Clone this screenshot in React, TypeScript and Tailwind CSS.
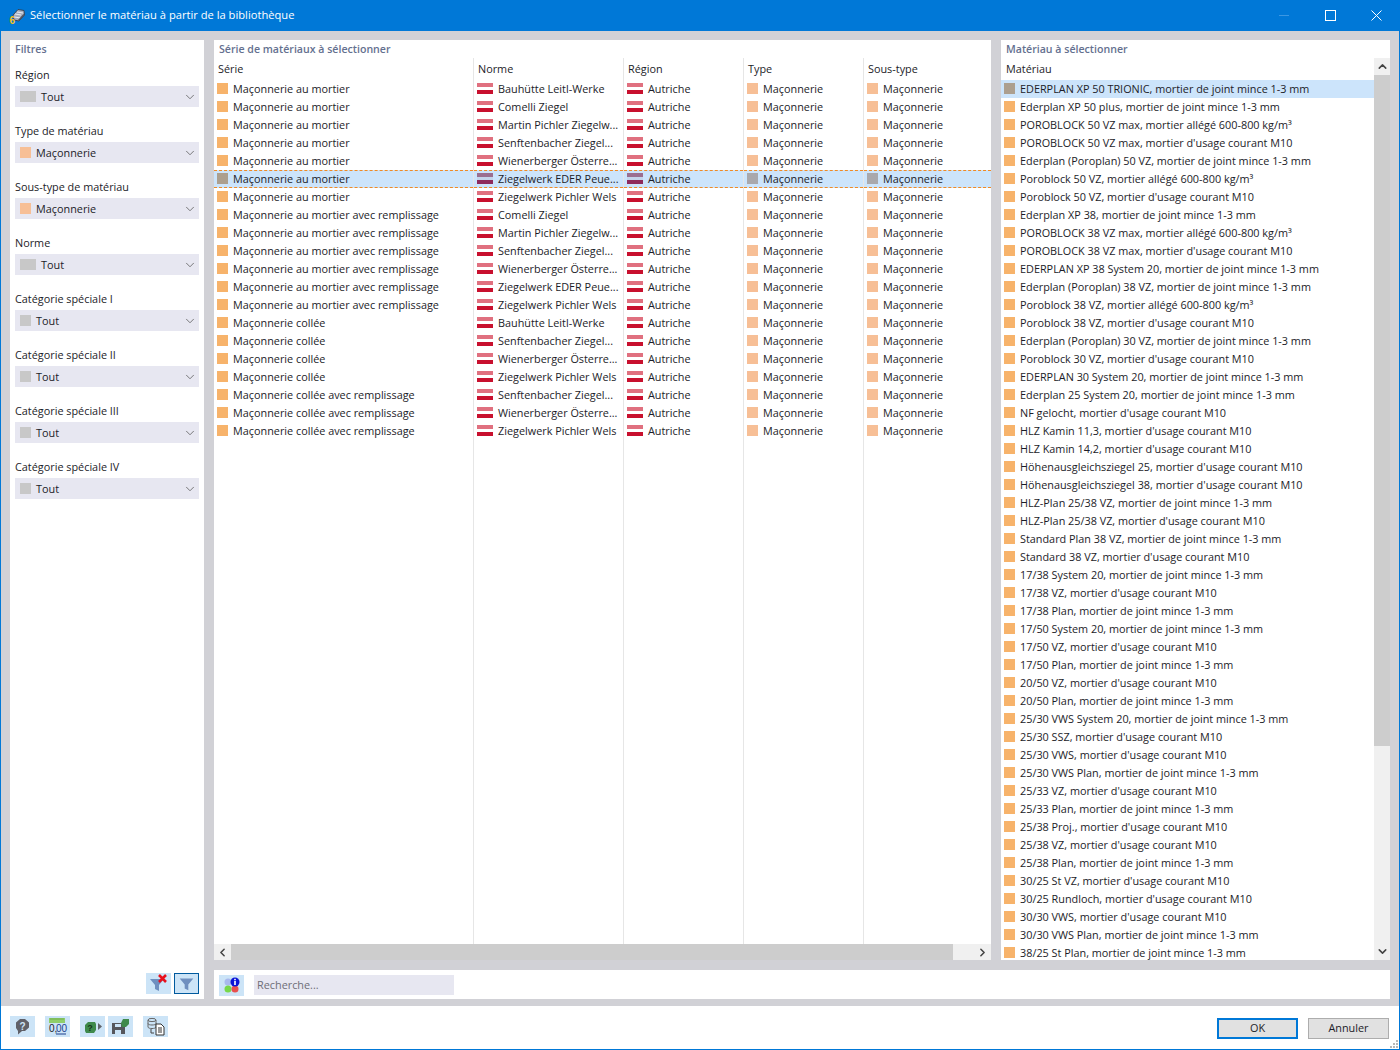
import { ChevronDown, ChevronLeft, ChevronRight, ChevronUp } from "lucide-react";

const FONT = "font-['Open_Sans',sans-serif]";

const series = [
  ...Array(7).fill("Maçonnerie au mortier"),
  ...Array(6).fill("Maçonnerie au mortier avec remplissage"),
  ...Array(4).fill("Maçonnerie collée"),
  ...Array(3).fill("Maçonnerie collée avec remplissage"),
];

const normes = [
  "Bauhütte Leitl-Werke",
  "Comelli Ziegel",
  "Martin Pichler Ziegelw...",
  "Senftenbacher Ziegel...",
  "Wienerberger Österre...",
  "Ziegelwerk EDER Peue...",
  "Ziegelwerk Pichler Wels",
  "Comelli Ziegel",
  "Martin Pichler Ziegelw...",
  "Senftenbacher Ziegel...",
  "Wienerberger Österre...",
  "Ziegelwerk EDER Peue...",
  "Ziegelwerk Pichler Wels",
  "Bauhütte Leitl-Werke",
  "Senftenbacher Ziegel...",
  "Wienerberger Österre...",
  "Ziegelwerk Pichler Wels",
  "Senftenbacher Ziegel...",
  "Wienerberger Österre...",
  "Ziegelwerk Pichler Wels",
];

const materials = [
  "EDERPLAN XP 50 TRIONIC, mortier de joint mince 1-3 mm",
  "Ederplan XP 50 plus, mortier de joint mince 1-3 mm",
  "POROBLOCK 50 VZ max, mortier allégé 600-800 kg/m³",
  "POROBLOCK 50 VZ max, mortier d'usage courant M10",
  "Ederplan (Poroplan) 50 VZ, mortier de joint mince 1-3 mm",
  "Poroblock 50 VZ, mortier allégé 600-800 kg/m³",
  "Poroblock 50 VZ, mortier d'usage courant M10",
  "Ederplan XP 38, mortier de joint mince 1-3 mm",
  "POROBLOCK 38 VZ max, mortier allégé 600-800 kg/m³",
  "POROBLOCK 38 VZ max, mortier d'usage courant M10",
  "EDERPLAN XP 38 System 20, mortier de joint mince 1-3 mm",
  "Ederplan (Poroplan) 38 VZ, mortier de joint mince 1-3 mm",
  "Poroblock 38 VZ, mortier allégé 600-800 kg/m³",
  "Poroblock 38 VZ, mortier d'usage courant M10",
  "Ederplan (Poroplan) 30 VZ, mortier de joint mince 1-3 mm",
  "Poroblock 30 VZ, mortier d'usage courant M10",
  "EDERPLAN 30 System 20, mortier de joint mince 1-3 mm",
  "Ederplan 25 System 20, mortier de joint mince 1-3 mm",
  "NF gelocht, mortier d'usage courant M10",
  "HLZ Kamin 11,3, mortier d'usage courant M10",
  "HLZ Kamin 14,2, mortier d'usage courant M10",
  "Höhenausgleichsziegel 25, mortier d'usage courant M10",
  "Höhenausgleichsziegel 38, mortier d'usage courant M10",
  "HLZ-Plan 25/38 VZ, mortier de joint mince 1-3 mm",
  "HLZ-Plan 25/38 VZ, mortier d'usage courant M10",
  "Standard Plan 38 VZ, mortier de joint mince 1-3 mm",
  "Standard 38 VZ, mortier d'usage courant M10",
  "17/38 System 20, mortier de joint mince 1-3 mm",
  "17/38 VZ, mortier d'usage courant M10",
  "17/38 Plan, mortier de joint mince 1-3 mm",
  "17/50 System 20, mortier de joint mince 1-3 mm",
  "17/50 VZ, mortier d'usage courant M10",
  "17/50 Plan, mortier de joint mince 1-3 mm",
  "20/50 VZ, mortier d'usage courant M10",
  "20/50 Plan, mortier de joint mince 1-3 mm",
  "25/30 VWS System 20, mortier de joint mince 1-3 mm",
  "25/30 SSZ, mortier d'usage courant M10",
  "25/30 VWS, mortier d'usage courant M10",
  "25/30 VWS Plan, mortier de joint mince 1-3 mm",
  "25/33 VZ, mortier d'usage courant M10",
  "25/33 Plan, mortier de joint mince 1-3 mm",
  "25/38 Proj., mortier d'usage courant M10",
  "25/38 VZ, mortier d'usage courant M10",
  "25/38 Plan, mortier de joint mince 1-3 mm",
  "30/25 St VZ, mortier d'usage courant M10",
  "30/25 Rundloch, mortier d'usage courant M10",
  "30/30 VWS, mortier d'usage courant M10",
  "30/30 VWS Plan, mortier de joint mince 1-3 mm",
  "38/25 St Plan, mortier de joint mince 1-3 mm",
];

const filters = [
  { label: "Région", value: "Tout", swatch: "wide" },
  { label: "Type de matériau", value: "Maçonnerie", swatch: "peach" },
  { label: "Sous-type de matériau", value: "Maçonnerie", swatch: "peach" },
  { label: "Norme", value: "Tout", swatch: "wide" },
  { label: "Catégorie spéciale I", value: "Tout", swatch: "gray" },
  { label: "Catégorie spéciale II", value: "Tout", swatch: "gray" },
  { label: "Catégorie spéciale III", value: "Tout", swatch: "gray" },
  { label: "Catégorie spéciale IV", value: "Tout", swatch: "gray" },
];

const SELECTED = 5;

function Flag({ selected }: { selected?: boolean }) {
  return (
    <span className="w-4 h-[11px] mb-[2px] flex flex-col shrink-0">
      <span className={`h-[4px] ${selected ? "bg-[#9a6f90]" : "bg-[#e0707f]"}`} />
      <span className={`h-[3px] ${selected ? "bg-[#c4d4ea]" : "bg-white"}`} />
      <span className={`h-[4px] ${selected ? "bg-[#8e2a5c]" : "bg-[#c8102e]"}`} />
    </span>
  );
}

function Swatch({ color }: { color: string }) {
  return <span className={`w-[11px] h-[11px] mb-[2px] shrink-0 ${color}`} />;
}

function Cell({ selected, icon, text }: { selected: boolean; icon: React.ReactNode; text: string }) {
  return (
    <div
      className={`h-[18px] flex items-center gap-[5px] pl-[3px] text-[10.85px] whitespace-nowrap overflow-hidden text-[#1c1c28] ${
        selected ? "bg-[#cce4fb] border-y border-dashed border-[#f08a24]" : ""
      }`}
    >
      {icon}
      <span>{text}</span>
    </div>
  );
}

function Column({
  title,
  width,
  rows,
  icon,
  last,
}: {
  title: string;
  width: string;
  rows: string[];
  icon: (selected: boolean) => React.ReactNode;
  last?: boolean;
}) {
  return (
    <div className={`${width} shrink-0 h-full flex flex-col ${last ? "" : "border-r border-[#e6e6e6]"}`}>
      <div className="h-[22px] flex items-center pl-1 text-[10.85px] text-[#1c1c28] shrink-0">{title}</div>
      {rows.map((r, i) => (
        <Cell key={i} selected={i === SELECTED} icon={icon(i === SELECTED)} text={r} />
      ))}
    </div>
  );
}

function ToolButton({ children, active }: { children: React.ReactNode; active?: boolean }) {
  return (
    <button
      className={`w-[25px] h-[21px] bg-[#cce4f7] flex items-center justify-center ${
        active ? "border border-[#005a9e]" : ""
      }`}
    >
      {children}
    </button>
  );
}

export default function App() {
  return (
    <div className={`relative w-[1400px] h-[1050px] flex flex-col bg-white border border-t-0 border-[#0078d7] ${FONT}`}>
      {/* barre de titre */}
      <div className="h-[31px] shrink-0 bg-[#0078d7] flex items-center text-white -mx-px">
        <svg viewBox="0 0 18 18" className="w-[18px] h-[18px] ml-[8px]">
          <path d="M5 8 L10 2.5 L16 3.5 L16.5 8 L11 14 L6 13 Z" fill="#a4acbc" stroke="#30343f" strokeWidth="0.8" />
          <path d="M7 7l6 1M9 5l6 1M6.5 10l6 1" stroke="#eef1f7" strokeWidth="0.9" />
          <path d="M11 14l5.5-6-1-1-5.5 6z" fill="#4d5261" />
          <text x="1.5" y="17" fontSize="10" fontWeight="700" fill="#f4c21c" fontFamily="Liberation Sans, sans-serif">6</text>
        </svg>
        <span className="ml-[4px] text-[11.17px]">Sélectionner le matériau à partir de la bibliothèque</span>
        <div className="ml-auto mr-px flex items-center">
          <span className="w-[46px] flex justify-center">
            <span className="w-[10px] h-px bg-[#3b97e3]" />
          </span>
          <span className="w-[46px] flex justify-center">
            <span className="w-[11px] h-[11px] border border-white" />
          </span>
          <span className="w-[46px] flex justify-center">
            <svg viewBox="0 0 11 11" className="w-[11px] h-[11px]">
              <path d="M.5.5l10 10M10.5.5l-10 10" stroke="#fff" strokeWidth="1" />
            </svg>
          </span>
        </div>
      </div>

      {/* contenu */}
      <div className="flex-1 min-h-0 bg-[#d1d1d6] pt-[9px] pb-[7px] px-[9px] flex gap-[10px]">
        {/* filtres */}
        <div className="w-[194px] shrink-0 bg-white flex flex-col px-[5px] pb-[5px]">
          <div className="h-[18px] pt-[2px] flex items-center text-[10.6px] font-semibold text-[#64708f]">Filtres</div>
          <div className="flex flex-col">
            {filters.map((f) => (
              <div key={f.label} className="h-[56px] flex flex-col pt-[8px]">
                <div className="h-[18px] mb-[2px] flex items-center text-[10.85px] text-[#1c1c28]">{f.label}</div>
                <div className="h-[21px] bg-[#e7e7f1] flex items-center pl-[5px] pr-[2px] text-[10.85px] text-[#1c1c28]">
                  {f.swatch === "wide" && <span className="w-4 h-[11px] bg-[#c8c8c8] mr-[5px]" />}
                  {f.swatch === "peach" && <span className="w-[11px] h-[11px] bg-[#f7bf96] mr-[5px]" />}
                  {f.swatch === "gray" && <span className="w-[11px] h-[11px] bg-[#c8c8c8] mr-[5px]" />}
                  <span className="pt-px">{f.value}</span>
                  <ChevronDown size={14} strokeWidth={1.3} className="ml-auto text-[#555]" />
                </div>
              </div>
            ))}
          </div>
          <div className="mt-auto flex justify-end gap-[3px]">
            <ToolButton>
              <svg viewBox="0 0 25 21" className="w-[25px] h-[21px]">
                <path d="M4 6h14l-5 6v6l-4-2v-4z" fill="#6f8fbf" />
                <path d="M13 2l7 7M20 2l-7 7" stroke="#e8101c" strokeWidth="2.6" />
              </svg>
            </ToolButton>
            <ToolButton active>
              <svg viewBox="0 0 25 21" className="w-[23px] h-[19px]">
                <path d="M5 5h15l-5.5 6.5V18l-4-2v-4.5z" fill="#6f8fbf" />
              </svg>
            </ToolButton>
          </div>
        </div>

        {/* colonne droite */}
        <div className="flex-1 min-w-0 flex flex-col gap-[10px]">
          <div className="flex-1 min-h-0 flex gap-[10px]">
            {/* séries */}
            <div className="w-[777px] shrink-0 bg-white flex flex-col">
              <div className="h-[18px] pt-[2px] shrink-0 flex items-center pl-[5px] text-[10.6px] font-semibold text-[#64708f]">
                Série de matériaux à sélectionner
              </div>
              <div className="flex-1 min-h-0 flex">
                <Column title="Série" width="w-[260px]" rows={series} icon={(s) => <Swatch color={s ? "bg-[#ac9f8f]" : "bg-[#f7b36b]"} />} />
                <Column title="Norme" width="w-[150px]" rows={normes} icon={(s) => <Flag selected={s} />} />
                <Column title="Région" width="w-[120px]" rows={Array(20).fill("Autriche")} icon={(s) => <Flag selected={s} />} />
                <Column title="Type" width="w-[120px]" rows={Array(20).fill("Maçonnerie")} icon={(s) => <Swatch color={s ? "bg-[#a9a8ac]" : "bg-[#f7bf96]"} />} />
                <Column title="Sous-type" width="w-[127px]" rows={Array(20).fill("Maçonnerie")} icon={(s) => <Swatch color={s ? "bg-[#a9a8ac]" : "bg-[#f7bf96]"} />} last />
              </div>
              <div className="h-[16px] shrink-0 flex items-center bg-[#f0f0f0]">
                <span className="w-[17px] flex justify-center text-[#444]"><ChevronLeft size={13} strokeWidth={2.8} /></span>
                <span className="w-[722px] h-full bg-[#cdcdcd]" />
                <span className="ml-auto w-[17px] flex justify-center text-[#444]"><ChevronRight size={13} strokeWidth={2.8} /></span>
              </div>
            </div>

            {/* matériaux */}
            <div className="flex-1 min-w-0 bg-white flex flex-col overflow-hidden">
              <div className="h-[18px] pt-[2px] shrink-0 flex items-center pl-[5px] text-[10.6px] font-semibold text-[#64708f]">
                Matériau à sélectionner
              </div>
              <div className="flex-1 min-h-0 flex">
                <div className="flex-1 min-w-0 flex flex-col overflow-hidden">
                  <div className="h-[22px] shrink-0 flex items-center pl-[5px] text-[10.85px] text-[#1c1c28]">Matériau</div>
                  {materials.map((m, i) => (
                    <div
                      key={i}
                      className={`h-[18px] shrink-0 flex items-center gap-[5px] pl-[3px] text-[10.85px] whitespace-nowrap text-[#1c1c28] ${
                        i === 0 ? "bg-[#cce4fb]" : ""
                      }`}
                    >
                      <Swatch color={i === 0 ? "bg-[#ac9f8f]" : "bg-[#f7b36b]"} />
                      <span>{m}</span>
                    </div>
                  ))}
                </div>
                <div className="w-4 shrink-0 bg-[#f0f0f0] flex flex-col">
                  <span className="h-[17px] flex items-center justify-center text-[#444]"><ChevronUp size={13} strokeWidth={2.8} /></span>
                  <span className="h-[671px] bg-[#cdcdcd]" />
                  <span className="mt-auto h-[17px] flex items-center justify-center text-[#444]"><ChevronDown size={13} strokeWidth={2.8} /></span>
                </div>
              </div>
            </div>
          </div>

          {/* recherche */}
          <div className="h-[29px] shrink-0 bg-white flex items-center pl-[5px] pt-px gap-[10px]">
            <ToolButton>
              <svg viewBox="0 0 25 21" className="w-[25px] h-[21px]">
                <circle cx="9" cy="7" r="3.5" fill="#a9b9ee" />
                <circle cx="9" cy="14" r="3.5" fill="#77d84a" />
                <circle cx="16" cy="14" r="3.5" fill="#e8504f" />
                <circle cx="16" cy="7" r="4.5" fill="#0a14d8" />
                <rect x="15.2" y="6" width="1.6" height="4" fill="#fff" />
                <rect x="15.2" y="3.8" width="1.6" height="1.5" fill="#fff" />
              </svg>
            </ToolButton>
            <div className="w-[200px] h-5 bg-[#e7e7f1] flex items-center pl-[3px] text-[10.85px] text-[#6e6e78]">Recherche...</div>
          </div>
        </div>
      </div>

      {/* pied */}
      <div className="h-[43px] shrink-0 flex items-start pt-[10px] pl-[9px] pr-[10px]">
        <ToolButton>
          <svg viewBox="0 0 25 21" className="w-[25px] h-[21px]">
            <path d="M10 3h5l4 3.5v5L15 15h-3l-4 3.5V15l-2-3V6.5z" fill="#5f6068" />
            <text x="12.5" y="13.5" textAnchor="middle" fontSize="10" fontWeight="700" fill="#cce4f7" fontFamily="Liberation Sans, sans-serif">?</text>
          </svg>
        </ToolButton>
        <span className="w-[10px]" />
        <ToolButton>
          <svg viewBox="0 0 25 21" className="w-[25px] h-[21px]">
            <rect x="4" y="2" width="16" height="5" fill="#8fce6a" />
            <path d="M6 2v2M8 2v2M10 2v2M12 2v2M14 2v2M16 2v2M18 2v2" stroke="#5e9a40" strokeWidth="0.6" />
            <text x="4" y="16" fontSize="10" fill="#1c1c28" fontFamily="Liberation Sans, sans-serif">0,</text>
            <text x="11" y="16" fontSize="10" fill="#1c3f8c" fontFamily="Liberation Sans, sans-serif">00</text>
            <path d="M11 18h10" stroke="#1c3f8c" strokeWidth="1" />
          </svg>
        </ToolButton>
        <span className="w-[10px]" />
        <ToolButton>
          <svg viewBox="0 0 25 21" className="w-[25px] h-[21px]">
            <path d="M5 9l3-3h7l1 2v6l-2 3H6l-1-2z" fill="#3f8a4c" />
            <text x="10" y="14.5" textAnchor="middle" fontSize="9" fontWeight="700" fill="#14361b" fontFamily="Liberation Sans, sans-serif">?</text>
            <path d="M18 7l4 3.5-4 3.5z" fill="#60646c" />
          </svg>
        </ToolButton>
        <span className="w-[3px]" />
        <ToolButton>
          <svg viewBox="0 0 25 21" className="w-[25px] h-[21px]">
            <path d="M4 7h11l2 2v9H4z" fill="#55565c" />
            <rect x="7" y="8" width="6" height="3" fill="#cce4f7" />
            <rect x="7" y="14" width="6" height="4" fill="#cce4f7" />
            <path d="M13 7l2-4h6v5l-3 3h-4z" fill="#3f8a4c" />
          </svg>
        </ToolButton>
        <span className="w-[10px]" />
        <ToolButton>
          <svg viewBox="0 0 25 21" className="w-[25px] h-[21px]">
            <ellipse cx="9" cy="4" rx="4" ry="1.6" fill="none" stroke="#666" />
            <path d="M5 4v7c0 2 8 2 8 0V4M5 7.5c0 2 8 2 8 0" fill="none" stroke="#666" />
            <path d="M8 13v4h3" fill="none" stroke="#444" />
            <path d="M13 8h5l3 3v8h-8z" fill="#fff" stroke="#333" />
            <path d="M15 12h4M15 14h4M15 16h4" stroke="#333" />
          </svg>
        </ToolButton>
        <div className="ml-auto flex gap-[10px] pt-[2px]">
          <button className="w-[81px] h-[21px] bg-[#e1e1e1] border-2 border-[#0078d7] text-[10.85px] text-[#1c1c28]">OK</button>
          <button className="w-[81px] h-[21px] bg-[#e1e1e1] border border-[#adadad] text-[10.85px] text-[#1c1c28]">Annuler</button>
        </div>
      </div>

      {/* poignée de redimensionnement */}
      <svg viewBox="0 0 9 9" className="absolute right-0 bottom-0 w-[9px] h-[9px]">
        <path d="M6 0h2v2H6zM3 3h2v2H3zM6 3h2v2H6zM0 6h2v2H0zM3 6h2v2H3zM6 6h2v2H6z" fill="#b8b8b8" />
      </svg>
    </div>
  );
}
